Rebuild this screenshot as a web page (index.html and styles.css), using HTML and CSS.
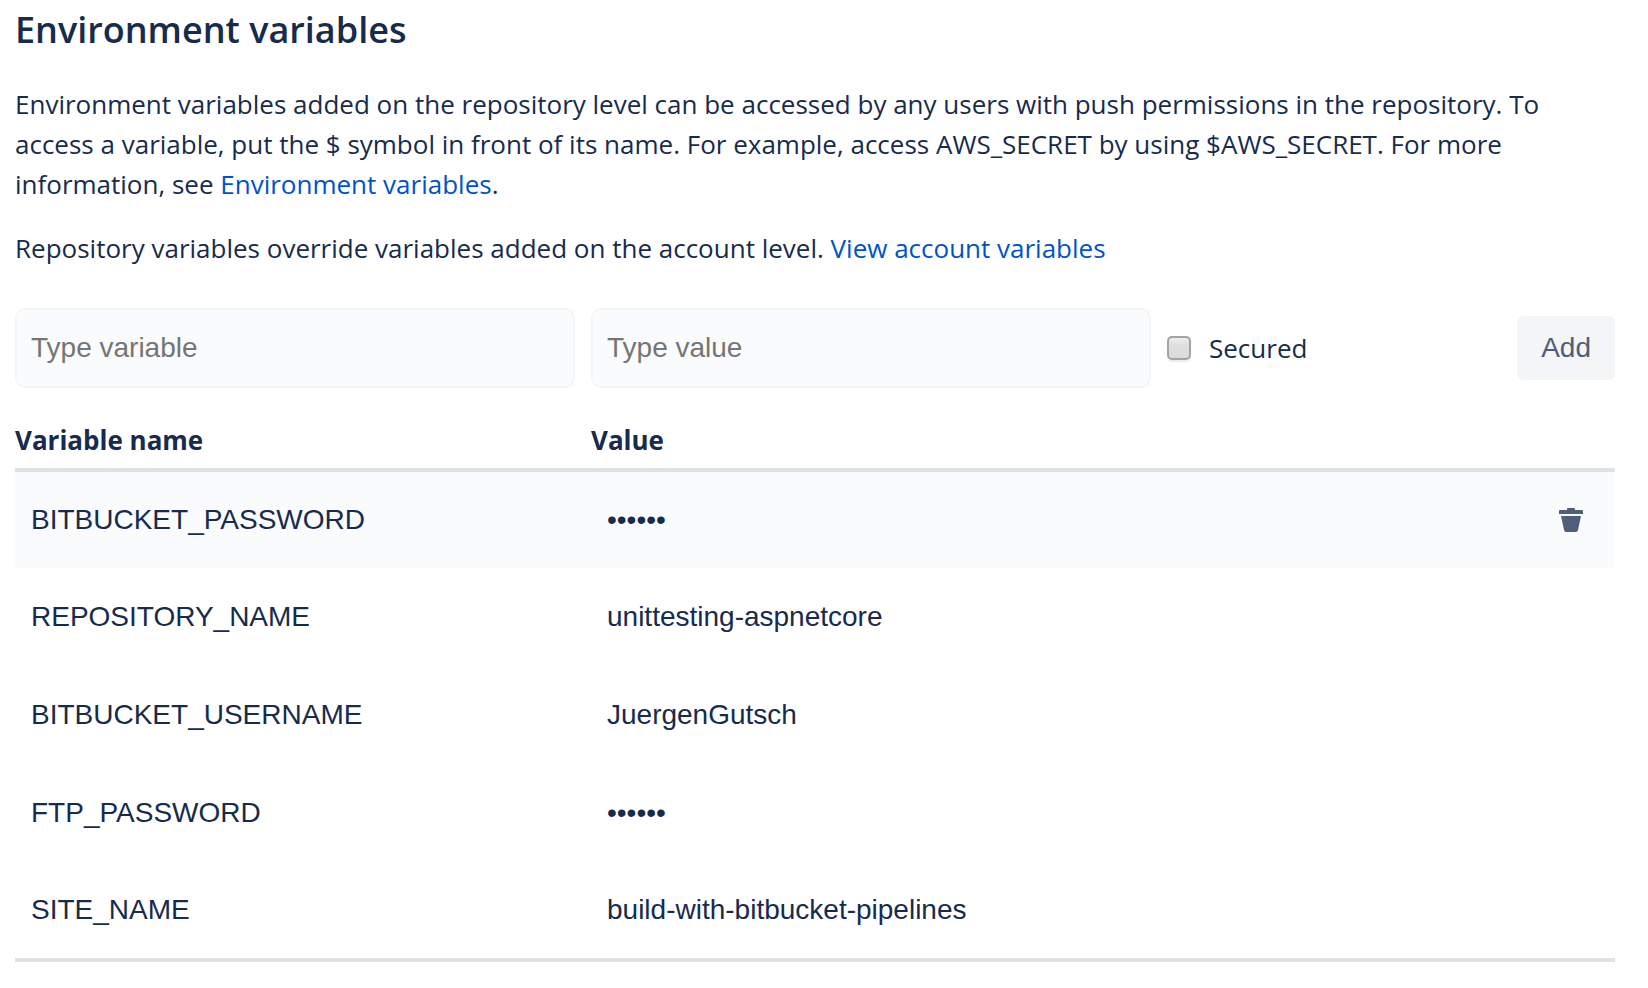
FILE: index.html
```html
<!DOCTYPE html>
<html lang="en">
<head>
<meta charset="utf-8">
<title>Environment variables</title>
<link rel="stylesheet" href="styles.css">
</head>
<body>
<main class="page">
  <h1 class="title">Environment variables</h1>
  <p class="text">Environment variables added on the repository level can be accessed by any users with push permissions in the repository. To access a variable, put the $ symbol in front of its name. For example, access AWS_SECRET by using $AWS_SECRET. For more information, see <a class="link" href="#">Environment variables</a>.</p>
  <p class="text">Repository variables override variables added on the account level. <a class="link" href="#">View account variables</a></p>
  <form class="form">
    <input class="field" type="text" placeholder="Type variable" aria-label="Variable name">
    <input class="field" type="text" placeholder="Type value" aria-label="Value">
    <div class="actions">
      <label class="secured" for="secured"><input class="check" type="checkbox" id="secured">Secured</label>
      <button class="add" type="button">Add</button>
    </div>
  </form>
  <table class="vars">
    <thead><tr><th class="name">Variable name</th><th class="value">Value</th><th class="tools"></th></tr></thead>
    <tbody>
      <tr class="active"><td>BITBUCKET_PASSWORD</td><td>••••••</td><td class="tools"><button class="delete" type="button" aria-label="Delete variable"><svg class="trash" viewBox="0 0 24 24"><path d="M1 2h7V1q0-1 1-1h6q1 0 1 1v1h7q1 0 1 1v3H0V3q0-1 1-1zM2 8h20l-3 14q-.5 2-2 2H7q-1.500 0-2-2z"/></svg></button></td></tr>
      <tr><td>REPOSITORY_NAME</td><td>unittesting-aspnetcore</td><td></td></tr>
      <tr><td>BITBUCKET_USERNAME</td><td>JuergenGutsch</td><td></td></tr>
      <tr><td>FTP_PASSWORD</td><td>••••••</td><td></td></tr>
      <tr><td>SITE_NAME</td><td>build-with-bitbucket-pipelines</td><td></td></tr>
    </tbody>
  </table>
</main>
</body>
</html>
```
FILE: styles.css
```css
* { box-sizing: border-box; }
body { margin: 0; background: #fff; color: #172b4d; font-family: "Segoe UI", "Open Sans", "Noto Sans", sans-serif; font-size: 26px; line-height: 40px; }
.page { padding: 8px 33px 24px 15px; }
.title { margin: 0 0 32px; font-size: 36px; line-height: 44px; font-weight: 600; }
.text { margin: 0 0 24px; }
.link { color: #0052cc; text-decoration: none; }
.form { display: grid; grid-template-columns: 35fr 35fr 28fr; gap: 16px; align-items: center; margin-top: 40px; }
.field { width: 100%; height: 80px; padding: 0 14px; border: 2px solid #f4f5f7; border-radius: 10px; background: #fafbfc; font: 28px "Liberation Sans", Arial, sans-serif; color: #172b4d; }
.field::placeholder { color: #757575; opacity: 1; }
.actions { display: flex; justify-content: space-between; align-items: center; }
.secured { display: flex; align-items: center; gap: 18px; }
.check { appearance: none; width: 24px; height: 24px; margin: 0; border: 2px solid #a3a3a3; border-radius: 5px; background: linear-gradient(#ededed, #dedede 40%, #dcdcdc); box-shadow: 0 2px 1px #ececec; }
.add { height: 64px; padding: 0 24px; border: 0; border-radius: 6px; background: #f4f5f7; color: #505f79; font: 28px "Liberation Sans", Arial, sans-serif; }
.vars { width: 100%; margin-top: 32px; border-collapse: collapse; table-layout: fixed; border-bottom: 4px solid #dfe1e6; }
.vars th { height: 50px; padding: 0 0 8px; border-bottom: 4px solid #dfe1e6; text-align: left; font-weight: 700; }
.name, .value { width: 36%; }
.vars td { height: 98px; padding: 0 16px; font-family: "Liberation Sans", Arial, sans-serif; font-size: 28px; }
.active { background: #fafbfc; }
.vars .tools { padding-right: 32px; }
.delete { display: block; margin-left: auto; padding: 0; border: 0; background: none; color: #505f79; }
.trash { display: block; width: 24px; height: 24px; fill: currentColor; }
```
